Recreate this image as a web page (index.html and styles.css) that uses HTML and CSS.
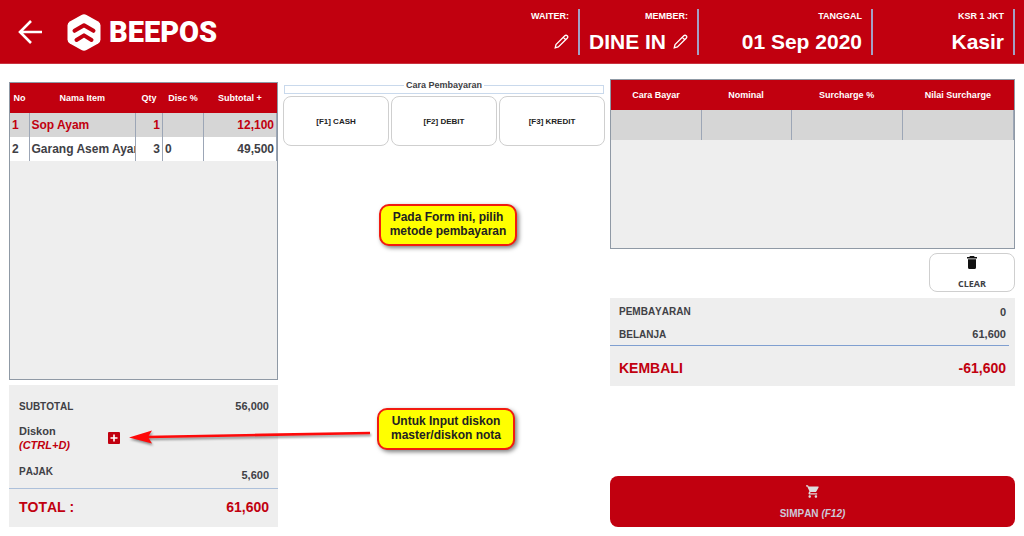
FILE: index.html
```html
<!DOCTYPE html>
<html lang="id">
<head>
<meta charset="utf-8">
<title>BEEPOS</title>
<link rel="stylesheet" href="styles.css">
</head>
<body>
<header class="topbar">
  <button class="icon-button" type="button" aria-label="Kembali">
    <svg width="24" height="24" viewBox="0 0 24 24" fill="none" stroke="#fff" stroke-width="2.6"><path d="M24 12H2M13 1 2 12l11 11"/></svg>
  </button>
  <div class="brand">
    <svg width="34" height="37" viewBox="0 0 34 37"><path fill="#fff" d="M14.500.900Q17-.500 19.500.900L31.200 7.500Q33.500 8.900 33.500 11.500V25.500Q33.500 28.200 31.200 29.600L19.500 36Q17 37.300 14.500 36L2.800 29.600Q.5 28.200.5 25.500V11.500Q.5 8.900 2.800 7.500Z"/><path fill="none" stroke="#c1000f" stroke-width="4" stroke-linecap="round" stroke-linejoin="round" d="M7.500 16.800 17 11.200 26.500 16.800M9.500 26 17 21.400 24.500 26"/></svg>
    <span>BEEPOS</span>
  </div>
  <div class="info">
    <span class="info-label">WAITER:</span>
    <span class="info-value"><button class="icon-button" type="button" aria-label="Ubah waiter"><svg width="15" height="15" viewBox="0 0 15 15" fill="none" stroke="#fff" stroke-width="1.300"><path d="M1.200 13.800 2 10.600 10.800 1.800Q12 .600 13.200 1.800 14.400 3 13.200 4.200L4.400 13ZM9.300 3.300l2.400 2.400"/></svg></button></span>
  </div>
  <div class="info info-member">
    <span class="info-label">MEMBER:</span>
    <span class="info-value">DINE IN <button class="icon-button" type="button" aria-label="Ubah member"><svg width="15" height="15" viewBox="0 0 15 15" fill="none" stroke="#fff" stroke-width="1.300"><path d="M1.200 13.800 2 10.600 10.800 1.800Q12 .600 13.200 1.800 14.400 3 13.200 4.200L4.400 13ZM9.300 3.300l2.400 2.400"/></svg></button></span>
  </div>
  <div class="info info-date">
    <span class="info-label">TANGGAL</span>
    <span class="info-value">01 Sep 2020</span>
  </div>
  <div class="info info-cashier">
    <span class="info-label">KSR 1 JKT</span>
    <span class="info-value">Kasir</span>
  </div>
</header>

<main class="workspace">
  <section class="order">
    <div class="table-box order-box">
      <table class="grid order-grid">
        <colgroup><col class="c-no"><col><col class="c-qty"><col class="c-disc"><col class="c-sub"></colgroup>
        <thead><tr><th>No</th><th>Nama Item</th><th>Qty</th><th>Disc %</th><th>Subtotal +</th></tr></thead>
        <tbody>
          <tr class="selected"><td>1</td><td>Sop Ayam</td><td class="num">1</td><td></td><td class="num">12,100</td></tr>
          <tr><td>2</td><td>Garang Asem Ayam</td><td class="num">3</td><td>0</td><td class="num">49,500</td></tr>
        </tbody>
      </table>
    </div>
    <div class="panel order-sum">
      <div class="row"><span>SUBTOTAL</span><span class="amount">56,000</span></div>
      <div class="row discount">
        <span class="discount-label">Diskon<br><em>(CTRL+D)</em></span>
        <button class="icon-button" type="button" aria-label="Tambah diskon"><svg width="12" height="12" viewBox="0 0 12 12"><rect width="12" height="12" rx="1" fill="#c1000f"/><path d="M6 2.500v7M2.500 6h7" stroke="#fff" stroke-width="1.600"/></svg></button>
      </div>
      <div class="row tax"><span>PAJAK</span><span class="amount">5,600</span></div>
      <div class="row total"><span>TOTAL :</span><span>61,600</span></div>
    </div>
  </section>

  <section class="methods">
    <fieldset class="methods-title"><legend>Cara Pembayaran</legend></fieldset>
    <div class="method-list">
      <button class="outline" type="button">[F1] CASH</button>
      <button class="outline" type="button">[F2] DEBIT</button>
      <button class="outline" type="button">[F3] KREDIT</button>
    </div>
  </section>

  <section class="payment">
    <div class="table-box payment-box">
      <table class="grid payment-grid">
        <colgroup><col class="c-pay"><col class="c-pay"><col><col></colgroup>
        <thead><tr><th>Cara Bayar</th><th>Nominal</th><th>Surcharge %</th><th>Nilai Surcharge</th></tr></thead>
        <tbody><tr class="selected"><td></td><td></td><td></td><td></td></tr></tbody>
      </table>
    </div>
    <button class="outline clear" type="button">
      <svg width="10" height="13" viewBox="0 0 10 13" fill="#111"><path d="M3 0h4l.7 1H10v1.400H0V1h2.300ZM1 3.200h8V11.500Q9 13 7.500 13h-5Q1 13 1 11.500Z"/></svg>
      <span>CLEAR</span>
    </button>
    <div class="panel payment-sum">
      <div class="row"><span>PEMBAYARAN</span><span class="amount">0</span></div>
      <div class="row due"><span>BELANJA</span><span class="amount">61,600</span></div>
      <div class="row total"><span>KEMBALI</span><span>-61,600</span></div>
    </div>
    <button class="save" type="button">
      <svg width="13" height="13" viewBox="1 2 21 20" fill="#ddd"><path d="M7 18c-1.100 0-2 .9-2 2s.9 2 2 2 2-.9 2-2-.9-2-2-2zM1 2v2h2l3.600 7.600-1.400 2.400c-.7 1.300.3 3 1.800 3h12v-2H7.400l1.100-2h7.500c.7 0 1.400-.4 1.700-1l3.600-6.500c.4-.7-.1-1.500-.9-1.500H5.200l-.9-2H1zm16 16c-1.100 0-2 .9-2 2s.9 2 2 2 2-.9 2-2-.9-2-2-2z"/></svg>
      <span>SIMPAN <em>(F12)</em></span>
    </button>
  </section>

  <svg class="arrow" width="250" height="24" viewBox="0 0 250 24"><path d="M18 12 241 8" stroke="#fe0a0a" stroke-width="2.600"/><path d="M0 12.500 23 5.500 19 12 23 18.500Z" fill="#fe0a0a"/></svg>
  <p class="note note-method">Pada Form ini, pilih<br>metode pembayaran</p>
  <p class="note note-discount">Untuk Input diskon<br>master/diskon nota</p>
</main>
</body>
</html>
```
FILE: styles.css
```css
* { box-sizing: border-box; }

body {
  margin: 0;
  min-height: 100vh;
  display: flex;
  flex-direction: column;
  background: #fff;
  color: #404045;
  font-family: "Liberation Sans", Arial, sans-serif;
  font-size: 10px;
  font-weight: bold;
}

button {
  font: inherit;
  color: inherit;
  margin: 0;
  cursor: pointer;
}

svg { display: block; }

.icon-button {
  border: 0;
  padding: 0;
  background: none;
}

/* Top bar */
.topbar {
  display: flex;
  align-items: center;
  padding: 9px 9px 8px 18px;
  background: #c1000f;
  color: #fff;
  border-bottom: 1px solid #c8333f;
}

.brand {
  display: flex;
  align-items: center;
  gap: 8px;
  margin-left: 25px;
  margin-right: auto;
  font: 900 29px/36px Roboto, sans-serif;
}

.info {
  height: 46px;
  padding: 0 9px 1px;
  border-right: 2px solid #a3a0c4;
  display: flex;
  flex-direction: column;
  justify-content: space-between;
  align-items: flex-end;
}

.info-member { min-width: 119px; }
.info-date { min-width: 174px; }
.info-cashier { min-width: 142px; }

.info-label {
  font-size: 9px;
  line-height: 14px;
}

.info-value {
  display: flex;
  align-items: center;
  gap: 7px;
  min-height: 24px;
  font-size: 21px;
  line-height: 24px;
}

.info-value .icon-button { padding-bottom: 2px; }

/* Workspace */
.workspace {
  flex: 1;
  position: relative;
  display: grid;
  grid-template-columns: 269fr 322fr 405fr;
  gap: 5px;
  padding: 15px 9px 9px;
}

.order, .payment {
  display: flex;
  flex-direction: column;
  min-width: 0;
}

.order { padding-top: 3px; }

.table-box {
  border: 1px solid #8f99a5;
  background: #eee;
}

.order-box {
  flex: 1;
  margin-bottom: 5px;
}

.payment-box { min-height: 170px; }

.grid {
  width: 100%;
  table-layout: fixed;
  border-collapse: collapse;
}

.grid th {
  height: 30px;
  padding: 0;
  background: #c1000f;
  color: #fff;
  font-size: 9px;
}

.grid td {
  height: 24px;
  padding: 0 2px;
  border-right: 1px solid #9ca6b6;
  background: #fff;
  font-size: 12px;
  line-height: 16px;
  overflow: hidden;
  white-space: nowrap;
}

.grid .selected td {
  background: #d6d6d6;
  color: #c1000f;
}

.grid .num { text-align: right; }
.payment-grid td { height: 30px; }

.c-no { width: 19px; }
.c-qty { width: 27px; }
.c-disc { width: 41px; }
.c-sub { width: 73px; }
.c-pay { width: 90px; }

/* Summaries */
.panel {
  background: #eee;
  font-kerning: none;
}

.row {
  display: flex;
  justify-content: space-between;
  align-items: center;
  padding: 0 9px;
}

.amount { font-size: 11px; }
.row em { color: #c1000f; }

.order-sum {
  padding-top: 10px;
}

.order-sum .row {
  min-height: 22px;
  padding-left: 10px;
}

.order-sum .discount {
  min-height: 42px;
  justify-content: flex-start;
}

.discount-label {
  width: 89px;
  font-size: 11px;
  line-height: 14px;
}

.order-sum .tax {
  height: 30px;
  padding-top: 6px;
  padding-bottom: 6px;
  align-items: flex-start;
  line-height: 13px;
  border-bottom: 1px solid #adc0da;
}

.tax .amount { align-self: flex-end; }

.row.total {
  height: 38px;
  color: #c1000f;
  font-size: 14px;
}

.order-sum .total { padding-bottom: 2px; }

.payment-sum {
  margin-top: 6px;
  padding-top: 2px;
}

.payment-sum .row { min-height: 23px; }

.payment-sum .due {
  margin-right: 6px;
  padding-right: 3px;
  border-bottom: 1px solid #7f9fd0;
}

.payment-sum .total {
  height: 40px;
  padding-top: 4px;
}

/* Payment methods */
.methods { padding-top: 1px; }

.methods-title {
  margin: 0 1px 2px;
  height: 14px;
  padding: 0;
  border: 1px solid #c9d9ec;
}

.methods-title legend {
  margin: 0 auto;
  padding: 0 2px;
  font-size: 9px;
  line-height: 11px;
}

.method-list {
  display: grid;
  grid-template-columns: repeat(3, 1fr);
  gap: 2px;
}

.outline {
  background: #fff;
  border: 1px solid #cfcfcf;
  border-radius: 8px;
}

.method-list .outline {
  height: 50px;
  padding: 0;
  font-size: 8px;
  color: #222;
}

.clear {
  align-self: flex-end;
  width: 86px;
  height: 39px;
  margin-top: 4px;
  padding: 2px 0 0;
  display: flex;
  flex-direction: column;
  align-items: center;
  justify-content: space-between;
  font: 700 9px/14px "Open Sans", sans-serif;
}

.save {
  height: 51px;
  margin-top: auto;
  padding: 9px 0 7px;
  border: 0;
  border-radius: 8px;
  background: #c1000f;
  color: #ccc8d8;
  display: flex;
  flex-direction: column;
  align-items: center;
  justify-content: space-between;
  font-kerning: none;
  line-height: 13px;
}

/* Annotations over the form */
.note {
  position: absolute;
  width: 138px;
  margin: 0;
  padding: 4px 0 6px;
  border: 2px solid #f21b10;
  border-radius: 10px;
  background: #ff0;
  box-shadow: 2px 2px 4px rgba(0, 0, 0, 0.5);
  color: #222;
  font-size: 12px;
  line-height: 14px;
  text-align: center;
}

.note-method { left: 379px; top: 140px; }
.note-discount { left: 377px; top: 344px; }

.arrow {
  position: absolute;
  left: 129px;
  top: 361px;
  filter: drop-shadow(1px 2px 1px rgba(0, 0, 0, 0.4));
}
```
